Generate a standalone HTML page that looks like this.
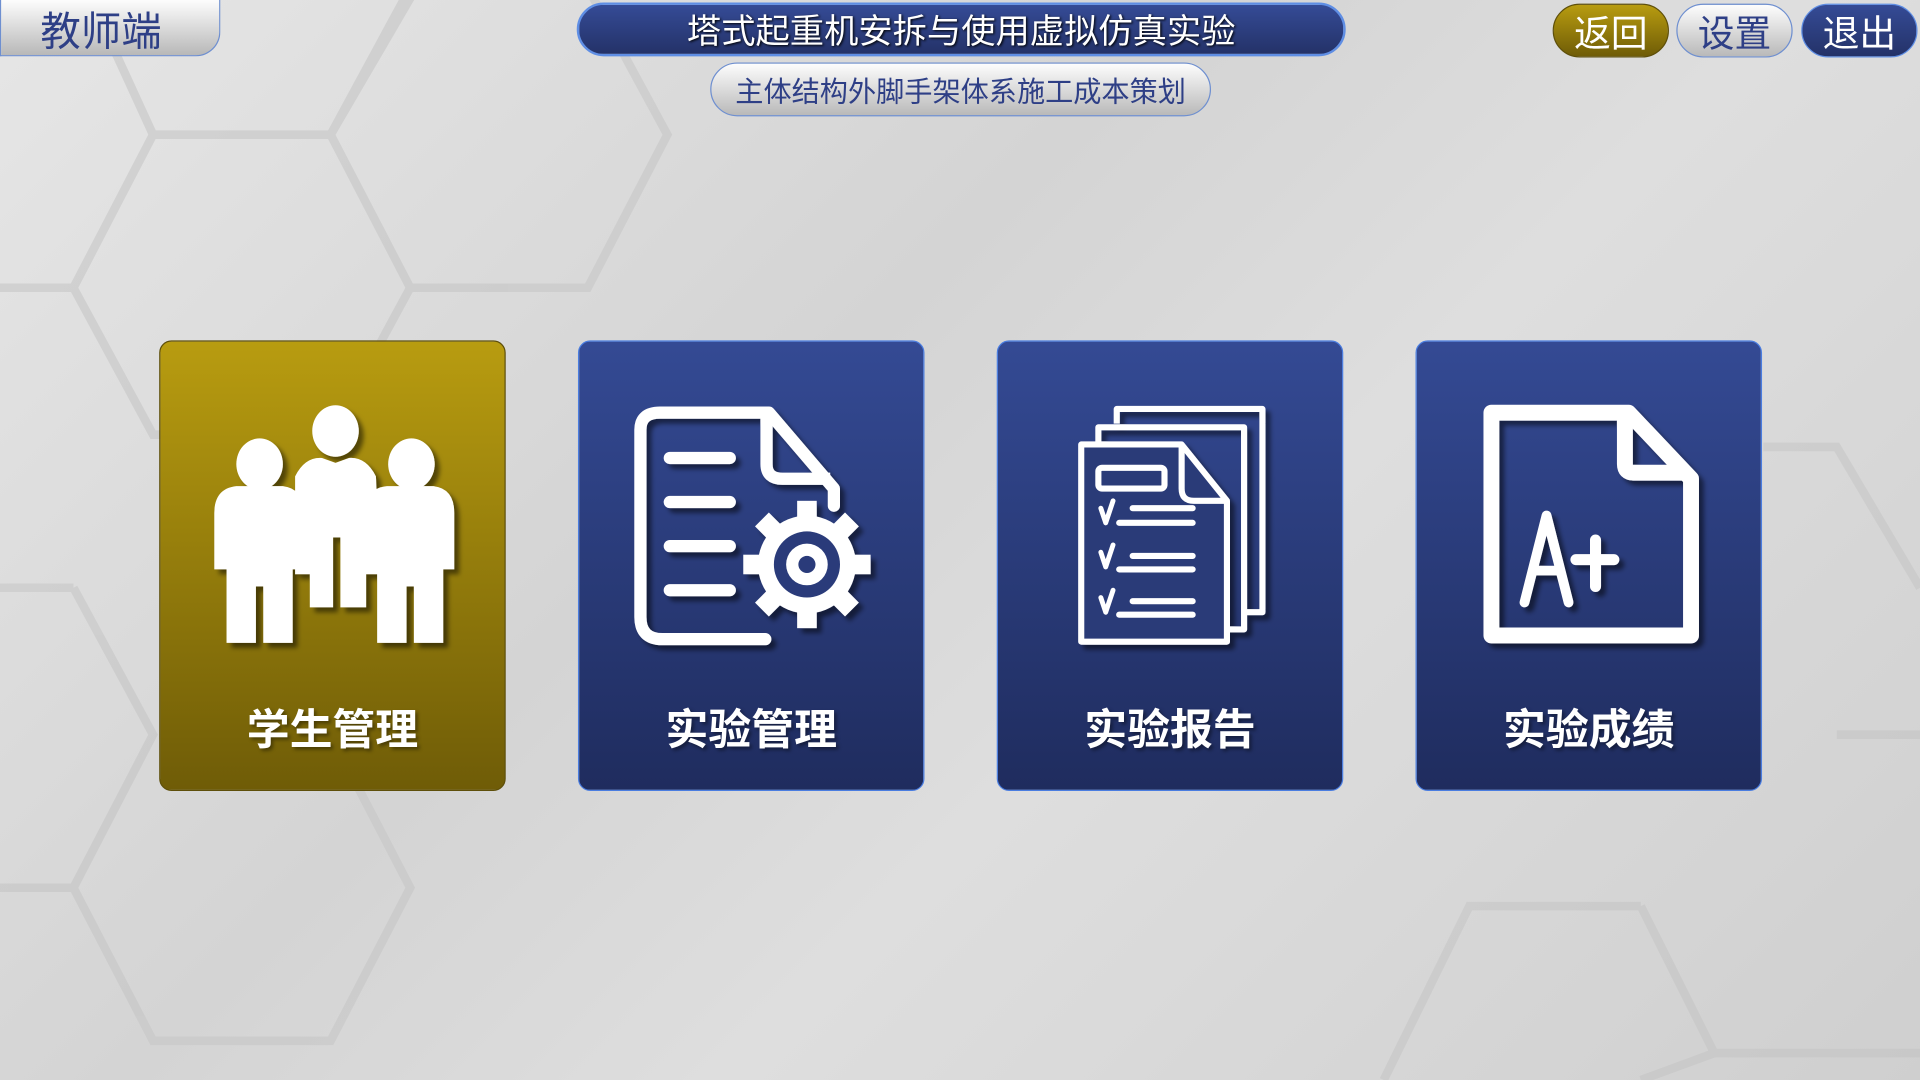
<!DOCTYPE html>
<html><head><meta charset="utf-8"><style>
html,body{margin:0;padding:0;width:1920px;height:1080px;overflow:hidden;background:#d9d9d9}
#s{position:absolute;left:0;top:0;width:1568px;height:882px;transform:scale(1.2244898);transform-origin:0 0;font-family:"Liberation Sans","Noto Sans CJK SC",sans-serif;
background:linear-gradient(135deg,#e6e6e6 0%,#d4d4d4 40%,#dedede 60%,#cfcfcf 100%)}
.abs{position:absolute}
.pill{position:absolute;display:flex;align-items:center;justify-content:center;box-sizing:border-box}
.card{position:absolute;top:278px;width:283px;height:368px;border-radius:10px;box-sizing:border-box}
.blue{background:linear-gradient(#344a94,#1f2c5e);border:1.5px solid #4a7de0}
.gold{background:linear-gradient(#b89c10,#6f5c07);border:1.5px solid #5e4f0a}
.lbl{position:absolute;left:0;width:100%;top:289px;text-align:center;color:#fff;font-size:35px;font-weight:bold;text-shadow:2px 2px 3px rgba(0,0,0,.4)}
svg.ic{position:absolute;left:0;top:0}
</style></head><body><div id="s">
<svg class="abs" style="left:0;top:0" width="1568" height="882" viewBox="0 0 1568 882">
<g fill="none" stroke="#c4c4c4" stroke-width="7" opacity=".55">
<path d="M70 -10 L125 110 L270 110 L340 -10"/>
<path d="M125 110 L60 235 L125 355 L270 355 L335 235 L270 110"/>
<path d="M270 110 L335 -10 M335 235 L480 235 L545 110 L480 -10"/>
<path d="M60 235 L0 235 M60 480 L0 480 M60 480 L125 600 L60 725 L0 725"/>
<path d="M60 725 L125 850 L270 850 L335 725 L270 600"/>
<path d="M1440 365 L1500 365 L1568 480 M1340 740 L1200 740 L1130 882 M1340 740 L1400 860 L1568 860"/>
<path d="M1500 600 L1568 600 M1400 860 L1340 882"/>
</g></svg>

<div class="pill" style="left:0;top:0;width:180px;height:46px;border-radius:0 0 20px 0;background:linear-gradient(#fdfdfd,#b8b8b8);border:1.5px solid #6e8fd0;border-top:none;color:#2e3f86;font-size:33px;justify-content:flex-start;padding-left:32px">教师端</div>

<div class="pill" style="left:471px;top:2px;width:628px;height:44px;border-radius:22px;background:linear-gradient(#354b96,#243268);border:2px solid #5f8ee4;color:#fff;font-size:28px;text-shadow:1px 1px 2px #000">塔式起重机安拆与使用虚拟仿真实验</div>

<div class="pill" style="left:580px;top:51px;width:409px;height:44px;border-radius:22px;background:linear-gradient(#fdfdfd,#b9b9b9);border:1.5px solid #6e8fd0;color:#2e3f86;font-size:23px">主体结构外脚手架体系施工成本策划</div>

<div class="pill" style="left:1268px;top:3px;width:95px;height:44px;border-radius:22px;background:linear-gradient(#b89c10,#6f5c07);border:1.5px solid #5e4f0a;color:#fff;font-size:30px">返回</div>
<div class="pill" style="left:1369px;top:3px;width:95px;height:44px;border-radius:22px;background:linear-gradient(#fdfdfd,#b9b9b9);border:1.5px solid #6e8fd0;color:#2e3f86;font-size:30px">设置</div>
<div class="pill" style="left:1471px;top:3px;width:95px;height:44px;border-radius:22px;background:linear-gradient(#354b96,#243268);border:1.5px solid #5f8ee4;color:#fff;font-size:30px">退出</div>

<div class="card gold" style="left:130px">
<svg class="ic" width="283" height="368" viewBox="0 0 283 368"><defs><filter id="sh"><feDropShadow dx="4" dy="4" stdDeviation="2" flood-color="#000" flood-opacity=".5"/></filter></defs>
<g fill="#fff" filter="url(#sh)">
<ellipse cx="143" cy="73" rx="19" ry="21"/>
<path d="M110 110 Q118 94 132 95 L143 99 L154 95 Q168 94 176 110 L180 190 L168 190 L168 217 L147 217 L147 160 L141 160 L141 217 L122 217 L122 190 L110 190 Z"/>
<ellipse cx="81" cy="100" rx="19" ry="21"/>
<path d="M44 140 Q44 120 62 118 L100 118 Q117 120 117 140 L117 186 L108 186 L108 246 L84 246 L84 200 L78 200 L78 246 L54 246 L54 186 L44 186 Z"/>
<ellipse cx="205" cy="100" rx="19" ry="21"/>
<path d="M167 140 Q167 120 185 118 L223 118 Q240 120 240 140 L240 186 L231 186 L231 246 L207 246 L207 200 L201 200 L201 246 L177 246 L177 186 L167 186 Z"/>
</g></svg>
<div class="lbl">学生管理</div></div>

<div class="card blue" style="left:472px">
<svg class="ic" width="283" height="368" viewBox="0 0 283 368">
<g filter="url(#sh)">
<path d="M152 243 L68 243 Q50 243 50 225 L50 72 Q50 58 66 58 L155 58 L208 120 L208 134" fill="none" stroke="#fff" stroke-width="10" stroke-linecap="round" stroke-linejoin="round"/>
<path d="M153 60 L153 100 Q153 112 166 112 L205 112" fill="none" stroke="#fff" stroke-width="10" stroke-linejoin="round"/>
<g stroke="#fff" stroke-width="10" stroke-linecap="round"><path d="M74 95 H123 M74 131 H123 M74 167 H123 M74 203 H123"/></g>
<g transform="translate(186,182)" fill="#fff">
<g><rect x="-8" y="-52" width="16" height="20"/><rect x="-8" y="32" width="16" height="20"/><rect x="-52" y="-8" width="20" height="16"/><rect x="32" y="-8" width="20" height="16"/>
<g transform="rotate(45)"><rect x="-8" y="-52" width="16" height="20"/><rect x="-8" y="32" width="16" height="20"/><rect x="-52" y="-8" width="20" height="16"/><rect x="32" y="-8" width="20" height="16"/></g></g>
<circle r="40"/><circle r="27" fill="#2a3b7a"/><circle r="17"/><circle r="7" fill="#2a3b7a"/>
</g></g></svg>
<div class="lbl">实验管理</div></div>

<div class="card blue" style="left:814px">
<svg class="ic" width="283" height="368" viewBox="0 0 283 368">
<g filter="url(#sh)" fill="none" stroke="#fff" stroke-width="5" stroke-linejoin="round">
<path d="M97 67 V55 H216 V221 H203"/>
<path d="M82 82 V70 H201 V235 H188"/>
<path d="M68 84 H150 L187 130 V245 H68 Z" fill="#2a3b78"/>
<path d="M150 84 V120 Q150 130 160 130 H187"/>
<rect x="82" y="103" width="54" height="17" rx="3"/>
<g stroke-linecap="round"><path d="M110 136 H159 M99 148 H159 M110 175 H159 M99 186 H159 M110 212 H159 M99 223 H159"/></g>
<g stroke-width="4" stroke-linecap="round"><path d="M84 136 L88 148 L94 130 M84 172 L88 184 L94 166 M84 209 L88 221 L94 203"/></g>
</g></svg>
<div class="lbl">实验报告</div></div>

<div class="card blue" style="left:1156px">
<svg class="ic" width="283" height="368" viewBox="0 0 283 368">
<g filter="url(#sh)">
<path d="M61 58 H173 L224 112 V240 H61 Z" fill="none" stroke="#fff" stroke-width="13" stroke-linejoin="round"/>
<path d="M170 58 V100 Q170 107 177 107 H222" fill="none" stroke="#fff" stroke-width="13" stroke-linejoin="round"/>
<path d="M88 213 L106 142 L124 213 M95 187 H117" fill="none" stroke="#fff" stroke-width="8" stroke-linecap="round" stroke-linejoin="round"/>
<path d="M146 162 V200 M130 178 H161" fill="none" stroke="#fff" stroke-width="9" stroke-linecap="round"/>
</g></svg>
<div class="lbl">实验成绩</div></div>
</div></body></html>
